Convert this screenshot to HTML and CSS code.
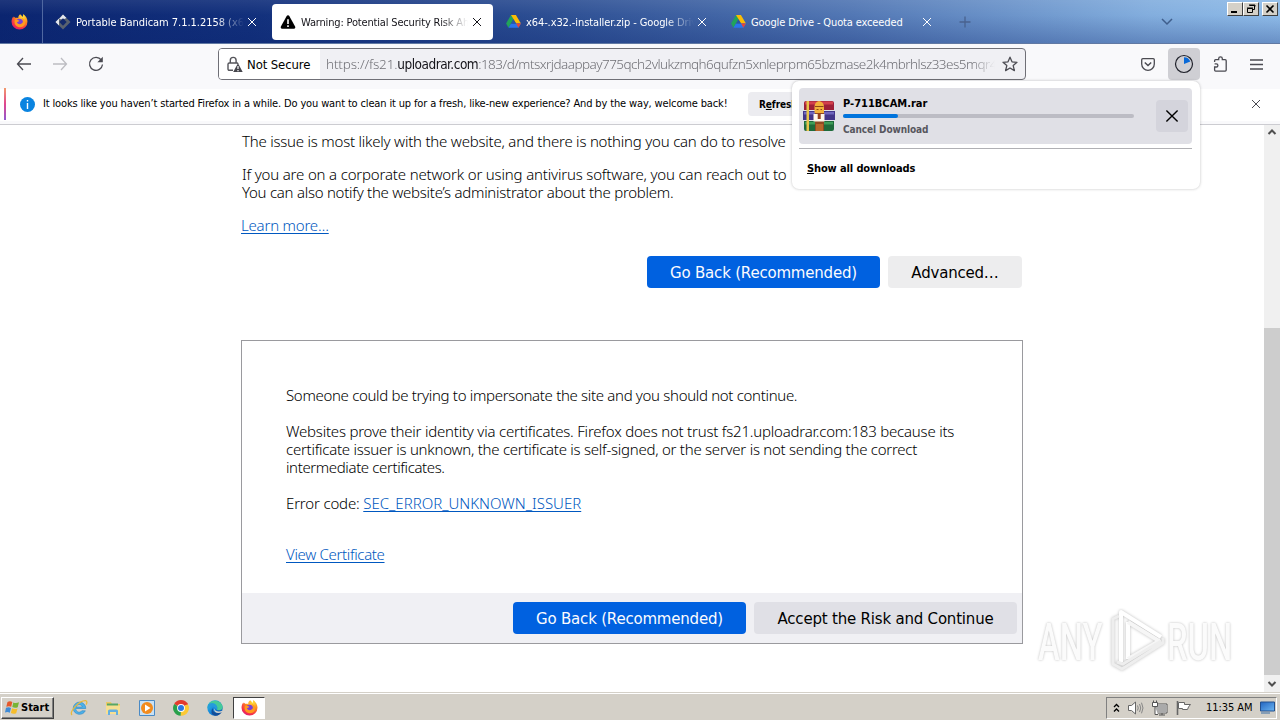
FILE: index.html
```html
<!DOCTYPE html>
<html lang="en">
<head>
<meta charset="utf-8">
<title>Warning: Potential Security Risk Ahead</title>
<link rel="stylesheet" href="styles.css">
</head>
<body>
<svg class="defs" width="0" height="0" aria-hidden="true">
  <defs>
    <radialGradient id="fire" cx=".7" cy=".15" r=".95"><stop offset="0" stop-color="#ffe33b"/><stop offset=".45" stop-color="#ff8a1c"/><stop offset=".8" stop-color="#f5314b"/><stop offset="1" stop-color="#d9177b"/></radialGradient>
    <linearGradient id="edgeg" x1="0" y1="0" x2="1" y2="1"><stop offset="0" stop-color="#37c7e8"/><stop offset=".5" stop-color="#1584d8"/><stop offset="1" stop-color="#0d4fa3"/></linearGradient>
    <linearGradient id="screen" x1="0" y1="0" x2="1" y2="1"><stop offset="0" stop-color="#2264c0"/><stop offset="1" stop-color="#6db6f2"/></linearGradient>
    <symbol id="fox" viewBox="0 0 16 16">
      <path d="M8.600 1.200c1.200.8 1.700 1.700 2 2.600.7-.7.9-1.800.8-2.800 2.500 1.600 4.100 4.300 4.100 7A7.400 7.400 0 0 1 8 15.600 7.400 7.400 0 0 1 .5 8.200c0-2 .7-3.600 1.700-4.900l.5 1.200 1-.9.4 1.200c1-.4 2.200-.3 2.700.1C6.700 3.300 7.400 2.100 8.600 1.200z" fill="url(#fire)"/>
      <circle cx="8" cy="8.600" r="3.300" fill="#7a3fd6"/>
      <path d="M3.600 6.800c1.500-.8 2.900-.2 4.300.4-.5.900-1.800.8-2.300 1.500.8 2.400 4.400 2.400 5.500.1.600-1.700-.2-3.300-1.400-4.200 3 .7 4.300 3.400 3.300 5.900-1.200 3-5 3.700-7.600 1.900C3.500 11 3 8.700 3.600 6.800z" fill="#ff9a1f"/>
    </symbol>
    <symbol id="drive" viewBox="0 0 16 14">
      <path d="M5.300 0h5.200L8 4.600z" fill="#169b4c"/><path d="M5.300 0 0 9.200l2.600 4.600L8 4.500z" fill="#21a35a"/><path d="M5.300 0h5.300L16 9.200h-5.300z" fill="#fbbc04"/><path d="M5.300 9.200H16l-2.700 4.600H2.600z" fill="#2a74ec"/><path d="M10.700 9.200H16l-2.700 4.600z" fill="#ea4335"/><path d="m8 4.600 2.700 4.600H5.300z" fill="#2b57a2"/>
    </symbol>
    <symbol id="x" viewBox="0 0 10 10"><path d="M1 1l8 8M9 1l-8 8" fill="none" stroke="currentColor" stroke-width="1"/></symbol>
  </defs>
</svg>

<div class="screen">
  <header class="tabs">
    <div class="pinned"><svg width="17" height="17"><use href="#fox"/></svg></div>
    <div class="tab tab-a">
      <svg width="16" height="16" viewBox="0 0 16 16"><path d="M8 .5 15.500 8 8 15.500.5 8z" fill="#59626f"/><path d="M8 .5 4 4.500v7L.5 8zM8 .5 11.500 4 8 5.500 4 5z" fill="#e4e7ee"/><path d="M8 4.300 11.700 8 8 11.700 4.300 8z" fill="#132a6c"/></svg>
      <span class="label fade">Portable Bandicam 7.1.1.2158 (x64</span>
      <svg class="close" width="10" height="10"><use href="#x"/></svg>
    </div>
    <div class="tab tab-b active">
      <svg width="16" height="16" viewBox="0 0 16 16"><path d="M8 1.200c.7 0 1 .4 1.300.9l5.800 10.500c.5 1 0 2.100-1.100 2.100H2c-1.100 0-1.600-1.100-1.100-2.100L6.700 2.100C7 1.600 7.300 1.200 8 1.200z" fill="#000"/><path d="M8 5.200v4.700M8 11.300v1.700" stroke="#fff" stroke-width="1.600"/></svg>
      <span class="label fade">Warning: Potential Security Risk Ahead</span>
      <svg class="close" width="10" height="10"><use href="#x"/></svg>
    </div>
    <div class="tab tab-c">
      <svg width="15" height="13"><use href="#drive"/></svg>
      <span class="label fade">x64-.x32.-installer.zip - Google Drive</span>
      <svg class="close" width="10" height="10"><use href="#x"/></svg>
    </div>
    <div class="tab tab-d">
      <svg width="15" height="13"><use href="#drive"/></svg>
      <span class="label">Google Drive - Quota exceeded</span>
      <svg class="close" width="10" height="10"><use href="#x"/></svg>
    </div>
    <svg class="plus" width="12" height="12" viewBox="0 0 12 12"><path d="M6 .5v11M.5 6h11" stroke="#49628f" stroke-width="1.300"/></svg>
    <svg class="alltabs" width="12" height="8" viewBox="0 0 12 8"><path d="m1 1 5 5 5-5" fill="none" stroke="#3f5e8c" stroke-width="1.500"/></svg>
    <div class="winbtns">
      <span class="wb"><svg width="12" height="10" viewBox="0 0 12 10"><path d="M2 7h6v2H2z"/></svg></span>
      <span class="wb"><svg width="12" height="10" viewBox="0 0 12 10"><path d="M4.500 1.500h5v4h-2M4 1h6v1.500M2.500 4.500h5v4h-5zM2 4h6" fill="none" stroke="#000"/></svg></span>
      <span class="wb gap"><svg width="12" height="10" viewBox="0 0 12 10"><path d="m2.500 1.500 7 7m0-7-7 7" stroke="#000" stroke-width="1.600"/></svg></span>
    </div>
  </header>

  <nav class="toolbar">
    <svg class="back" width="16" height="14" viewBox="0 0 16 14"><path d="M15 7H1.500M7 1 1.500 7 7 13" fill="none" stroke="#4b4b52" stroke-width="1.300"/></svg>
    <svg class="fwd" width="16" height="14" viewBox="0 0 16 14"><path d="M1 7h13.500M9 1l5.500 6L9 13" fill="none" stroke="#bdbdc2" stroke-width="1.300"/></svg>
    <svg class="reload" width="16" height="16" viewBox="0 0 16 16"><path d="M13.300 4A6.500 6.500 0 1 0 14.500 8.500" fill="none" stroke="#4b4b52" stroke-width="1.300"/><path d="M14.800.8v5.400H9.400z" fill="#4b4b52"/></svg>
    <div class="urlbar">
      <div class="identity">
        <svg width="16" height="17" viewBox="0 0 16 17"><path d="M6 14.300H2.300c-.8 0-1.300-.5-1.300-1.300V8.300C1 7.500 1.500 7 2.300 7h7.900l1 .8M3.300 7V4.300a2.900 2.900 0 0 1 5.800 0V7" fill="none" stroke="#55555b" stroke-width="1.400"/><path d="M11 7.300 15.700 16H6.200z" fill="#45454c"/><path d="M11 10v3m0 1v1.200" stroke="#fff" stroke-width="1.200"/></svg>
        <span class="notsecure">Not Secure</span>
      </div>
      <div class="url"><span class="pre">https://fs21.</span><b>uploadrar.com</b><span class="post">:183/d/mtsxrjdaappay775qch2vlukzmqh6qufzn5xnleprpm65bzmase2k4mbrhlsz33es5mqr4l</span></div>
      <svg width="16" height="16" viewBox="0 0 16 16"><path d="m8 1.200 2 4.600 5 .5-3.800 3.300 1.200 5L8 12l-4.400 2.600 1.200-5L1 6.300l5-.5z" fill="none" stroke="#4b4b52" stroke-width="1.300" stroke-linejoin="round"/></svg>
    </div>
    <div class="tools">
      <svg class="pocket" width="14" height="13" viewBox="0 0 14 13"><path d="M1.800.7h10.400q1.100 0 1.100 1.100V6a6.300 6.300 0 0 1-12.600 0V1.800Q.7.700 1.800.7z" fill="none" stroke="#4b4b52" stroke-width="1.300"/><path d="m3.800 4.500 3.200 3 3.200-3" fill="none" stroke="#4b4b52" stroke-width="1.500"/></svg>
      <span class="dl"><svg width="20" height="20" viewBox="0 0 20 20"><circle cx="10" cy="10" r="8.500" fill="none" stroke="#20222b" stroke-width="1.200"/><path d="M10 10V3.200a6.800 6.800 0 0 1 6.300 4.400z" fill="#0869d8"/></svg></span>
      <svg class="ext" width="15" height="16" viewBox="0 0 15 16"><path d="M1.600 6V4.700c0-.7.300-1 1-1h3.100V2.600a1.800 1.800 0 0 1 3.600 0v1.100h2.900c.7 0 1 .3 1 1v9.400c0 .7-.3 1-1 1H2.600c-.7 0-1-.3-1-1V11h1.700a1.600 1.600 0 0 0 0-3.200H1.600" fill="none" stroke="#4b4b52" stroke-width="1.300"/></svg>
      <svg class="menu" width="13" height="11" viewBox="0 0 13 11"><path d="M0 1h13M0 5.500h13M0 10h13" stroke="#4b4b52" stroke-width="1.300"/></svg>
    </div>
  </nav>

  <div class="notice">
    <svg class="info-icon" width="15" height="15" viewBox="0 0 15 15"><circle cx="7.500" cy="7.500" r="7.500" fill="#0a84e0"/><path d="M7.500 3v1.600M7.500 6v6" stroke="#fff" stroke-width="1.400"/></svg>
    <span class="msg">It looks like you haven’t started Firefox in a while. Do you want to clean it up for a fresh, like-new experience? And by the way, welcome back!</span>
    <span class="refresh">R<u>e</u>fresh</span>
    <svg class="nx" width="10" height="10"><use href="#x"/></svg>
  </div>

  <div class="view">
    <main class="page">
      <p class="p1">The issue is most likely with the website, and there is nothing you can do to resolve</p>
      <p class="p2"><span class="l2">If you are on a corporate network or using antivirus software, you can reach out to</span><br><span class="l3">You can also notify the website’s administrator about the problem.</span></p>
      <p class="p3"><a>Learn more…</a></p>
      <div class="row">
        <span class="btn primary">Go Back (Recommended)</span>
        <span class="btn adv">Advanced…</span>
      </div>
      <section class="panel">
        <div class="body">
          <p class="s1">Someone could be trying to impersonate the site and you should not continue.</p>
          <p class="s2"><span class="w1">Websites prove their identity via certificates. Firefox does not trust fs21.uploadrar.com:183 because its</span><br><span class="w2">certificate issuer is unknown, the certificate is self-signed, or the server is not sending the correct</span><br><span class="w3">intermediate certificates.</span></p>
          <p class="s3"><span class="ec">Error code: </span><a class="code">SEC_ERROR_UNKNOWN_ISSUER</a></p>
          <p class="s4"><a>View Certificate</a></p>
        </div>
        <div class="foot">
          <span class="btn primary">Go Back (Recommended)</span>
          <span class="btn risk">Accept the Risk and Continue</span>
        </div>
      </section>
    </main>
    <div class="scroll">
      <svg width="16" height="17" viewBox="0 0 16 17"><path d="m4.500 9 3.500-3.500 3.500 3.500" fill="none" stroke="#505050" stroke-width="2"/></svg>
      <div class="thumb"></div>
      <svg width="16" height="17" viewBox="0 0 16 17"><path d="m4.500 7 3.500 3.500L11.500 7" fill="none" stroke="#505050" stroke-width="2"/></svg>
    </div>
  </div>

  <footer class="taskbar">
    <div class="start">
      <svg width="15" height="15" viewBox="0 0 15 15"><path d="M2.500 2Q5 .5 7.300 2L6.200 6.800Q4 5.500 1.300 6.800z" fill="#e5582b"/><path d="M8.300 2.400q2.500 1.400 5.700-.1l-1.300 4.900q-2.700 1.200-5.400-.2z" fill="#78b436"/><path d="M1 7.800q2.600-1.300 5 .1l-1.200 4.900Q2.500 11.300 0 12.600z" fill="#3f8bd6"/><path d="M7 8.300q2.700 1.300 5.500.1l-1.300 4.800q-2.700 1.300-5.300-.1z" fill="#f6bd2b"/></svg>
      <b>Start</b>
    </div>
    <div class="apps">
      <svg width="18" height="18" viewBox="0 0 18 18"><path d="M5.500 9.500h10.300A6.300 6.300 0 0 0 3.200 9.300c0 6.500 9.500 8.300 12.100 2.500h-3.500c-1.400 2.300-5.600 1.600-5.700-1.300M6 8c.5-3 6-3.100 6.300 0z" fill="#4cb1e8" stroke="#2c86c8" stroke-width=".6"/><path d="M2 16c-3-3 7-14.500 13.500-14.300 2 .3 1.500 2.300.6 3.900" fill="none" stroke="#e9b93a" stroke-width="1.300"/></svg>
      <svg width="18" height="18" viewBox="0 0 18 18"><path d="M2 3h5l1 2h8v10H2z" fill="#ebc966"/><path d="M3 4.500h11v3H3z" fill="#58a765"/><path d="M2 6.500h14V15H2z" fill="#f7df91"/><path d="M4 16v-4q0-1.500 1.500-1.500h7Q14 10.500 14 12v4h-2v-3H6v3z" fill="#63afe0"/></svg>
      <svg width="18" height="18" viewBox="0 0 18 18"><path d="M1.500 1.500h15v15h-15z" fill="#c9e1f4" stroke="#4a8ac5"/><circle cx="9" cy="9" r="6" fill="#f28b1d"/><path d="m7 5.500 5.500 3.500L7 12.500z" fill="#fff"/></svg>
      <svg width="18" height="18" viewBox="0 0 18 18"><path d="M9 9 2.200 5A7.800 7.800 0 0 1 15.800 5z" fill="#e33b2e"/><path d="M9 9 8.800 16.800A7.800 7.800 0 0 1 2.200 5z" fill="#29a04b"/><path d="M9 9l6.800-4a7.800 7.800 0 0 1-7 11.800z" fill="#fcc934"/><path d="M9 5h6.800" stroke="#e33b2e"/><circle cx="9" cy="9" r="3.900" fill="#fff"/><circle cx="9" cy="9" r="3" fill="#2b78e4"/></svg>
      <svg width="18" height="18" viewBox="0 0 18 18"><circle cx="9" cy="9" r="7.700" fill="url(#edgeg)"/><path d="M2 6C5-.5 15.500.5 16.700 8c0 3-3.500 4-6 2.600 1.300-1.500.4-4.300-2.200-4.600C5.800 5.600 3 6.800 1.500 9z" fill="#45ca9a"/><path d="M2 6C4 3.500 9 3 11 7.500c.5 1.500 0 2.500-.7 3.200C9 8 5.300 5.500 1.500 9z" fill="#259bdc"/><path d="M7 9c-1 5 5 6.500 9 3.500-3 5.500-9 5-10.500 1.500Q4.700 11 7 9z" fill="#124d99"/><path d="M8.500 9.300c0 3 4 4.200 7.700 2.500l.5 1q-5 2.500-7.700 0-1.500-1.700-.5-3.500z" fill="#d4d0c8"/></svg>
    </div>
    <div class="running"><svg width="17" height="17"><use href="#fox"/></svg></div>
    <div class="tray">
      <svg class="chev" width="7" height="10" viewBox="0 0 7 10"><path d="m1 4 2.500-2.500L6 4M1 8.500 3.500 6 6 8.500" fill="none" stroke="#000" stroke-width="1.300"/></svg>
      <svg width="17" height="16" viewBox="0 0 17 16"><path d="M1.500 5.500h3L8.500 2v12l-4-3.500h-3z" fill="#fff" stroke="#666"/><path d="M10.500 5.500q1.500 2.500 0 5M12.500 4q2.500 4 0 8M14.500 2.700q3 5.300 0 10.600" fill="none" stroke="#858585"/></svg>
      <svg width="17" height="16" viewBox="0 0 17 16"><path d="M5.500 4.500h10v8h-10z" fill="#aaa" stroke="#fff"/><path d="M5 4h11v9H5zM8 15h6M11 13v2" fill="none" stroke="#555"/><path d="M1.500 2.500h5v4h-5zM2.500.5v2m3-2v2M4 6.500v8h3" fill="#fff" stroke="#555"/></svg>
      <svg width="17" height="16" viewBox="0 0 17 16"><path d="M2.500 1v14" stroke="#666" stroke-width="1.600"/><path d="M3.500 2.500h6v2h6L13.500 7l-1 2.500h-5v-1h-4z" fill="#fff" stroke="#666"/></svg>
      <span class="clock">11:35 AM</span>
      <svg class="desk" width="15" height="13" viewBox="0 0 15 13"><path d="M.5 1h14v9H.5z" fill="url(#screen)" stroke="#23508e"/><path d="M1 12h9" stroke="#6d8eb0" stroke-width="1.500"/></svg>
    </div>
  </footer>

  <aside class="popup">
    <div class="item">
      <svg width="32" height="32" viewBox="0 0 32 32"><path d="M1 3q0-2 2-2h26q2 0 2 2v7H1z" fill="#9e2038"/><path d="M2 1.500h28v3H2z" fill="#d2404c"/><path d="M0 11h32v9H0z" fill="#43368a"/><path d="M1 12h30v2.500H1z" fill="#6f66bd"/><path d="M1 21h30v8q0 2-2 2H3q-2 0-2-2z" fill="#1f6b3b"/><path d="M2 22h28v2.500H2z" fill="#3f9d58"/><path d="M3.500 1H6v30H3.500z" fill="#e7c34a"/><path d="M12 11h9v20h-9z" fill="#8f4a24"/><path d="M11.500 13V7q0-5 4.500-6 5 1 5 6v6z" fill="#f2b03a"/><path d="M12 6.500h8.500M13.500 9.500h2m2 0h1.500" stroke="#8c4a14" stroke-width="1.200"/><path d="M10.500 14h11v7.500h-11z" fill="#fff7ea"/><path d="M14.700 13h3v6h-3z" fill="#96401f"/><path d="M13 24h7v7h-7z" fill="#b8672b"/></svg>
      <div class="info">
        <b class="fname">P-711BCAM.rar</b>
        <div class="bar"><i></i></div>
        <b class="cancel">Cancel Download</b>
      </div>
      <span class="cx"><svg width="14" height="14"><use href="#x"/></svg></span>
    </div>
    <b class="all"><u>S</u>how all downloads</b>
  </aside>

  <div class="watermark">
    <span class="wm">ANY</span>
    <svg width="60" height="66" viewBox="0 0 60 66"><g class="mark" fill="none" stroke-linejoin="round"><path d="M14 54V4l40 25M21 14v37" stroke="#fff" stroke-width="4"/><path d="M21 14l31 19-31 18" stroke="#f6f6f6" stroke-width="4"/><path d="M56 30v5L15 61l-9-5V11l6-3M10 54l6 2 38-23" stroke="#eeeeee" stroke-width="3"/></g></svg>
    <span class="wm">RUN</span>
  </div>
</div>
</body>
</html>
```
FILE: styles.css
```css
* { box-sizing: border-box; }
body { margin: 0; font-family: "DejaVu Sans Condensed", "DejaVu Sans", sans-serif; font-stretch: condensed; font-size: 11px; color: #000; }
p { margin: 0; }
svg { flex: none; display: block; }
.defs { position: absolute; }
.screen { position: relative; width: 1280px; height: 720px; overflow: hidden; display: flex; flex-direction: column; background: #fff; }
span, b, a { white-space: nowrap; }

.tabs { height: 44px; flex: none; display: flex; align-items: center; color: #fff; background: linear-gradient(180deg, rgba(255,255,255,.08), rgba(10,35,110,.0) 35%, rgba(10,35,110,.28)), linear-gradient(90deg, #0b2570 0, #12307c 250px, #2e5094 560px, #5277b4 850px, #83aede 1150px, #8ebbe8 1280px); border-bottom: 1px solid #6179a3; }
.pinned { width: 43px; height: 43px; padding-left: 11px; display: flex; align-items: center; border-right: 1px solid #5068a1; }
.tab { height: 36px; display: flex; align-items: center; border-radius: 4px; }
.label { overflow: hidden; margin-left: 5px; line-height: 16px; padding-top: 3px; }
.fade { -webkit-mask-image: linear-gradient(90deg, #000 calc(100% - 28px), transparent); mask-image: linear-gradient(90deg, #000 calc(100% - 28px), transparent); }
.close { margin-left: auto; }
.tab-a { width: 221px; padding: 0 7px 0 12px; margin-left: 0; }
.tab-a .label { width: 168px; letter-spacing: -.03px; }
.tab-b { width: 221px; margin-left: 8px; padding: 0 11px 0 8px; }
.tab-b .label { width: 167px; letter-spacing: -.17px; }
.active { background: #fff; color: #15141a; }
.tab-c { width: 221px; margin-left: 4px; padding: 0 11px 0 9px; }
.tab-c .label { width: 168px; letter-spacing: -.1px; }
.tab-d { width: 221px; margin-left: 4px; padding: 0 11px 0 9px; letter-spacing: -.13px; }
.plus { margin-left: 16px; }
.alltabs { margin-left: 190px; }
.winbtns { display: flex; margin-left: auto; align-self: flex-start; padding: 2px 2px 0 0; }
.wb { width: 16px; height: 14px; padding: 1px; background: #d4d0c8; border: 1px solid; border-color: #fff #404040 #404040 #fff; }
.wb.gap { margin-left: 3px; }

.toolbar { height: 42px; flex: none; display: flex; align-items: center; padding-bottom: 2px; background: #f9f9fb; }
.back { margin-left: 16px; }
.fwd { margin-left: 20px; }
.reload { margin-left: 20px; }
.urlbar { width: 808px; height: 32px; margin-left: 114px; display: flex; align-items: center; border: 1px solid #6f6f76; border-radius: 4px; background: #f0f0f4; padding-right: 7px; }
.identity { width: 101px; height: 30px; display: flex; align-items: center; padding-left: 8px; background: #fff; border-radius: 3px 0 0 3px; }
.notsecure { margin-left: 4px; font-size: 13px; letter-spacing: -.1px; }
.url { width: 669px; margin: 0 7px 0 6px; overflow: hidden; white-space: nowrap; font: 300 13.5px "Noto Sans", sans-serif; color: #707076; -webkit-mask-image: linear-gradient(90deg, #000 645px, transparent 669px); mask-image: linear-gradient(90deg, #000 645px, transparent 669px); }
.pre { letter-spacing: -.17px; }
.url b { font: 400 13.5px "DejaVu Sans Condensed", "DejaVu Sans", sans-serif; font-stretch: condensed; letter-spacing: -.5px; color: #15141a; }
.post { letter-spacing: -.53px; }
.tools { display: flex; align-items: center; margin-left: 115px; }
.dl { width: 32px; height: 32px; margin: 0 13px; border-radius: 4px; background: #cfcfd4; display: flex; align-items: center; justify-content: center; }
.menu { margin-left: 22px; }

.notice { height: 39px; flex: none; display: flex; align-items: center; background: linear-gradient(#f9f9fb 3px, #fff 3px, #fff 35px, #f9f9fb 35px); border-bottom: 1px solid #ccccd1; padding: 0 0 2px 4px; }
.notice::before { content: ""; width: 2px; height: 32px; margin-right: 14px; background: linear-gradient(#f29a6d, #e0458e, #9059d0); }
.msg { width: 685px; margin: -1px 0 0 8px; font-size: 11px; letter-spacing: -.145px; }
.refresh { margin-left: 20px; width: 140px; height: 24px; line-height: 25px; padding-left: 11px; border-radius: 4px; background: #ececf0; font-weight: bold; font-size: 10px; letter-spacing: -.1px; }
.nx { margin-left: auto; margin-right: 19px; color: #4b4b52; }

.view { flex: 1; min-height: 0; display: flex; justify-content: space-between; }
.page { margin-left: 241px; width: 782px; font-family: "Noto Sans", sans-serif; font-size: 15px; font-stretch: normal; font-weight: 300; line-height: 18px; padding-top: 7px; color: #000; }
.page a { color: #0058c0; text-decoration: underline; text-underline-offset: 2px; text-decoration-thickness: 1px; }
.p1 { letter-spacing: -.22px; padding-left: 1px; }
.p2, .p3 { margin-top: 15px; padding-left: 1px; }
.l2 { letter-spacing: -.17px; }
.l3 { letter-spacing: -.26px; }
.p3 { letter-spacing: -.2px; padding-left: 0; }
.row { display: flex; gap: 8px; margin-top: 22px; padding-right: 1px; justify-content: flex-end; }
.btn { height: 32px; line-height: 34px; border-radius: 4px; text-align: center; font-family: "DejaVu Sans", sans-serif; font-weight: 400; font-size: 15px; letter-spacing: -.2px; background: #ededee; }
.primary { width: 233px; background: #0061e0; color: #fbfbfe; }
.adv { width: 134px; }
.risk { width: 263px; background: #e0e0e6; }
.panel { margin-top: 52px; height: 304px; border: 1px solid #9a9a9e; display: flex; flex-direction: column; }
.body { flex: 1; padding: 45px 44px 0; }
.s1 { letter-spacing: -.32px; }
.s2, .s3 { margin-top: 18px; }
.w1 { letter-spacing: -.21px; }
.w2 { letter-spacing: -.255px; }
.w3 { letter-spacing: -.38px; }
.ec { letter-spacing: -.17px; }
.s4 { margin-top: 33px; letter-spacing: -.34px; }
.foot { height: 50px; background: #f0f0f4; display: flex; gap: 8px; justify-content: flex-end; padding: 9px 5px; }

.scroll { width: 16px; background: #f0f0f0; display: flex; flex-direction: column; }
.thumb { margin-top: 186px; flex: 1; background: #cdcdcd; }

.taskbar { height: 28px; flex: none; background: #d4d0c8; border-top: 1px solid #d4d0c8; box-shadow: inset 0 1px #fff; display: flex; align-items: center; padding-top: 2px; }
.start { width: 53px; height: 22px; margin-left: 1px; padding-left: 3px; display: flex; align-items: center; gap: 1px; font-size: 11px; border: 1px solid; border-color: #fff #404040 #404040 #fff; box-shadow: inset -1px -1px #808080; }
.apps { display: flex; gap: 16px; margin-left: 16px; }
.running { width: 32px; height: 22px; margin-left: 9px; background: #fff; border: 1px solid; border-color: #404040 #fff #fff #404040; display: flex; align-items: center; justify-content: center; }
.tray { margin-left: auto; margin-right: 3px; width: 171px; height: 22px; display: flex; align-items: center; gap: 7px; border: 1px solid; border-color: #808080 #fff #fff #808080; padding-left: 6px; }
.clock { margin-left: 7px; letter-spacing: -.05px; }

.popup { position: absolute; left: 792px; top: 81px; width: 408px; height: 108px; padding: 7px 8px 0 7px; background: #fff; border-radius: 7px; box-shadow: 0 0 3px rgba(0,0,0,.25); }
.item { height: 56px; display: flex; align-items: center; padding: 0 4px; border-radius: 4px; background: #e0e0e6; }
.info { width: 291px; margin-left: 8px; display: flex; flex-direction: column; }
.fname { font-size: 11px; line-height: 14px; padding-top: 1px; }
.bar { height: 4px; margin: 3px 0 6px; border-radius: 2px; background: #bcbcc4; }
.bar i { display: block; width: 55px; height: 4px; border-radius: 2px; background: #0074dd; }
.cancel { font-size: 10px; line-height: 12px; letter-spacing: -.1px; color: #57575e; }
.cx { width: 32px; height: 32px; margin-left: auto; border-radius: 4px; background: #d4d4dc; display: flex; align-items: center; justify-content: center; }
.all { display: block; margin-top: 4px; border-top: 1px solid #b0b0b4; padding: 13px 8px 11px; line-height: 14px; letter-spacing: -.12px; }

.watermark { position: absolute; left: 1038px; top: 608px; width: 196px; height: 66px; display: flex; align-items: center; }
.watermark svg { margin-left: 5px; }
.mark { filter: drop-shadow(0 0 1.5px #bdbdbd); }
.wm { width: 64px; flex: none; padding-top: 2px; font: 500 52px "Roboto", sans-serif; color: #fbfbfb; text-shadow: 0 0 3px #b8b8b8; transform: scaleX(.63); transform-origin: left; }
```
